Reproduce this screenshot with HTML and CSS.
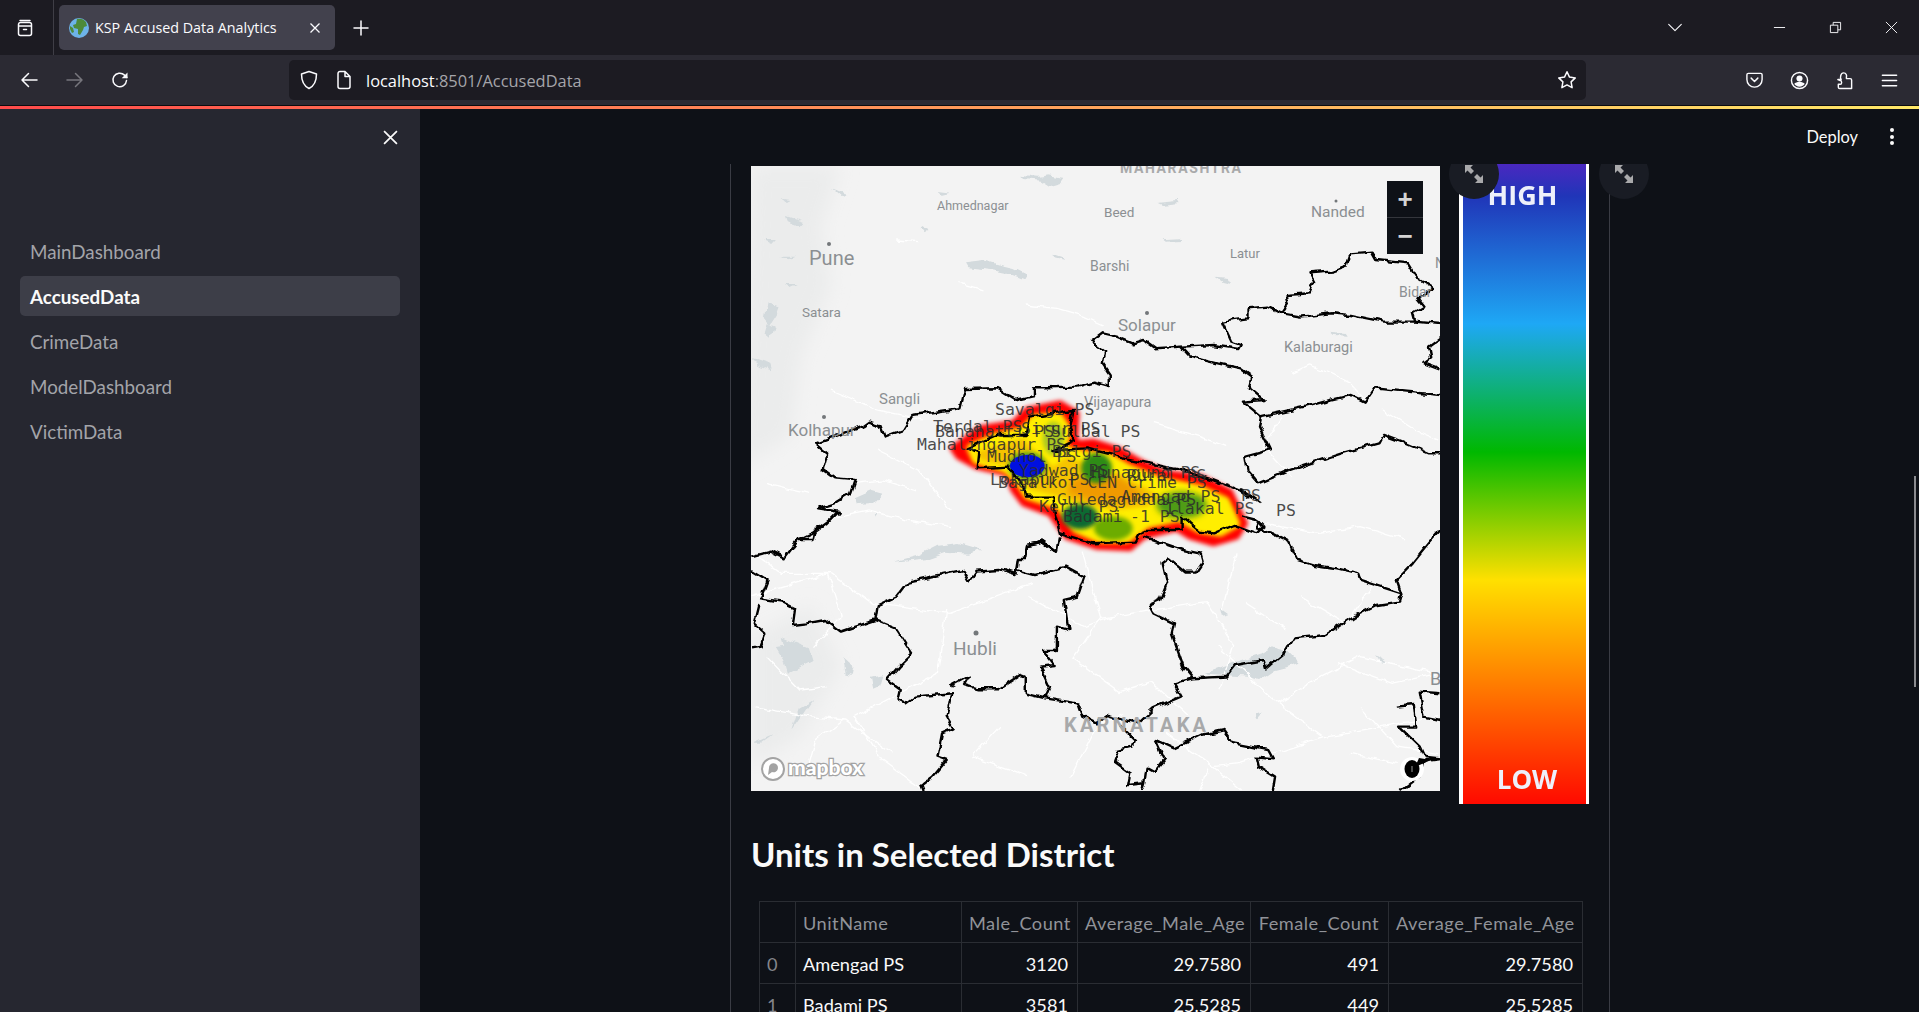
FILE: index.html
```html
<!DOCTYPE html>
<html lang="en">
<head>
    <meta charset="UTF-8">
    <title>KSP Accused Data Analytics</title>
    <link rel="stylesheet" href="styles.css">
</head>
<body>
<div class="window">
    <!-- browser tabs -->
    <div class="tabbar">
        <div class="tabbar-left">
            <svg class="ico" viewBox="0 0 20 20"><path d="M5 2.500h10M3.500 6.500a2 2 0 0 1 2-2h9a2 2 0 0 1 2 2v9a2 2 0 0 1-2 2h-9a2 2 0 0 1-2-2zM3.500 8h13M8.500 11.500h3"/></svg>
        </div>
        <div class="tab">
            <svg class="favicon" viewBox="0 0 20 20"><circle cx="10" cy="10" r="10" fill="#6db3e8"/><path d="M8 1c3-1 7 0 9 3l1 4-3 1-1 3-3 5-2-1 0-5-4-1-1-3 3-1z" fill="#4d8a3a"/><path d="M1 8l3 2 1 4-2 1-2-4z" fill="#4d8a3a"/></svg>
            <span class="tab-title">KSP Accused Data Analytics</span>
            <svg class="tab-close" viewBox="0 0 12 12"><path d="M1.500 1.500l9 9M10.500 1.500l-9 9"/></svg>
        </div>
        <svg class="ico new-tab" viewBox="0 0 20 20"><path d="M10 3v14M3 10h14"/></svg>
        <div class="tabbar-right">
            <svg class="ico tabs-list" viewBox="0 0 20 20"><path d="M3 6l7 7 7-7"/></svg>
            <svg class="win-btn" viewBox="0 0 14 14"><path d="M1 7h12"/></svg>
            <svg class="win-btn" viewBox="0 0 14 14"><path d="M1.500 4.500h8v8h-8zM4.500 4.500v-3h8v8h-3"/></svg>
            <svg class="win-btn" viewBox="0 0 14 14"><path d="M1 1l12 12M13 1L1 13"/></svg>
        </div>
    </div>

    <!-- browser toolbar -->
    <div class="toolbar">
        <svg class="ico back" viewBox="0 0 20 20"><path d="M18 10H3M9.500 3.500L3 10l6.500 6.500"/></svg>
        <svg class="ico forward" viewBox="0 0 20 20"><path d="M2 10h15M10.500 3.500L17 10l-6.500 6.500"/></svg>
        <svg class="ico reload" viewBox="0 0 20 20"><path d="M16.500 10.500a6.800 6.800 0 1 1-2-5.400l2.300 2.300"/><path class="solid" d="M17.500 2.500v5.800h-5.800z"/></svg>
        <div class="urlbar">
            <svg class="ico shield" viewBox="0 0 20 20"><path d="M10 1.500l7.500 2.500c0 7-1.500 11.500-7.500 14.500C4 15.500 2.500 11 2.500 4z"/></svg>
            <svg class="ico page" viewBox="0 0 20 20"><path d="M4 3.500a2 2 0 0 1 2-2h5l5 5v10a2 2 0 0 1-2 2H6a2 2 0 0 1-2-2zM11 1.500v5h5"/></svg>
            <span class="url"><b>localhost</b>:8501/AccusedData</span>
            <svg class="ico star" viewBox="0 0 20 20"><path d="M10 1.800l2.500 5.300 5.800.8-4.200 4 1 5.800-5.100-2.800-5.100 2.800 1-5.800-4.200-4 5.800-.8z"/></svg>
        </div>
        <div class="toolbar-right">
            <svg class="ico" viewBox="0 0 20 20"><path d="M2 4a1.500 1.500 0 0 1 1.500-1.500h13A1.500 1.500 0 0 1 18 4v5a8 8 0 0 1-16 0zM6.500 7.500L10 11l3.500-3.500"/></svg>
            <svg class="ico" viewBox="0 0 20 20"><circle cx="10" cy="10" r="8.500"/><circle class="solid" cx="10" cy="8" r="3.200"/><path class="solid" d="M4.500 13.500c1-1.500 3-2 5.500-2s4.500.5 5.500 2c-1 1.700-3 3-5.500 3s-4.500-1.300-5.500-3z"/></svg>
            <svg class="ico" viewBox="0 0 20 20"><path d="M3 9h3.500C5 7 6 2 9 2s3.500 3 3 4.500V8h4a1.500 1.500 0 0 1 1.500 1.500V18.500H5a1.500 1.500 0 0 1-1.500-1.500v-3h2c2 0 2-4 0-4z"/></svg>
            <svg class="ico" viewBox="0 0 20 20"><path d="M2.500 4.500h15M2.500 10h15M2.500 15.500h15"/></svg>
        </div>
    </div>
    <div class="loadline"></div>

    <div class="app">
        <aside class="sidebar">
            <div class="sidebar-top">
                <svg class="sidebar-close" viewBox="0 0 14 14"><path d="M1 1l12 12M13 1L1 13"/></svg>
            </div>
            <nav class="side-nav">
                <a href="#">MainDashboard</a>
                <a href="#" class="active">AccusedData</a>
                <a href="#">CrimeData</a>
                <a href="#">ModelDashboard</a>
                <a href="#">VictimData</a>
            </nav>
        </aside>

        <main class="main">
            <div class="app-header">
                <span class="deploy">Deploy</span>
                <span class="kebab"><i></i><i></i><i></i></span>
            </div>
            <div class="content">
                <div class="block">
                    <div class="chart-row">
                        <div class="map">
                            <svg class="map-svg" viewBox="0 0 689 625">
                                <defs>
                                    <filter id="blur2" x="-20%" y="-20%" width="140%" height="140%"><feGaussianBlur stdDeviation="7"/></filter>
                                    <filter id="blur3" x="-20%" y="-20%" width="140%" height="140%"><feGaussianBlur stdDeviation="10"/></filter>
                                    <filter id="rough" filterUnits="userSpaceOnUse" x="0" y="0" width="689" height="625">
                                        <feTurbulence type="fractalNoise" baseFrequency=".09" numOctaves="2" seed="4"/>
                                        <feDisplacementMap in="SourceGraphic" scale="7" xChannelSelector="R" yChannelSelector="G"/>
                                    </filter>
                                    <filter id="terrain" filterUnits="userSpaceOnUse" x="0" y="0" width="689" height="625">
                                        <feGaussianBlur stdDeviation="9"/>
                                    </filter>
                                </defs>

                                <!-- soft shading on the west side -->
                                <g class="shade" filter="url(#terrain)">
                                    <path d="M0 0h90l-20 60 10 60-30 70-10 80-50 30z"/>
                                    <path d="M0 470l60-30 30 60-40 70-50 30z"/>
                                </g>

                                <g filter="url(#rough)">
                                    <!-- water and roads, north part -->
                                    <g transform="translate(-11,-16) scale(.4593,.3333)">
                                        <g class="water">
                                            <path d="M610 74l40 6 20-4 36 8-8 16-22 8-18-16-40-5z"/>
                                            <path d="M490 340l45-8 30 12 30 10 30 20-6 14-36-18-36-10-52-8z"/>
                                            <path d="M392 228l16 12-5 10-14-12z"/>
                                            <path d="M905 156l46-6 4 10-36 5zM920 268l38-3 3 8-34 2zM680 314l28 12 2 6-26-8zM1035 380l26 4 8 18-18-6z"/>
                                            <path d="M1285 548l32 4 4 8-28-2zM30 625l36 16 4 20-32-16z"/>
                                            <path d="M250 1045l36-22 22 8-18 28-36 4zM290 1095l10-4-6 12zM870 935l26 8 14 10-24-2z"/>
                                            <path d="M60 460l26 12-6 22-14 30-12-20zM60 520l16 10-8 34-14-16zM100 198l40 18-8 12-28-14zM50 270l26 0-8 12zM90 320l34 0-24 8zM100 405l26 0-16 10zM90 146l18 4-8 6zM200 118l30 16-10 8zM430 120l30 5-20 6z"/>
                                        </g>
                                        <g class="roads">
                                            <path d="M620 465l70 10 50 20 50 30M1200 670l40-25 30 15 60 40 40 60M1400 780l70 60 50 30M340 270l50 5M480 400l50 20M200 720l100 60 100 30"/>
                                            <path d="M150 1160l60-60 70-20 80 30 100 20M250 1000l60-10 70 30M900 820l100 40 60 30M1140 1120l120 30 90-20 100 40M300 900l90 60 70 120M60 1000l90 30M1180 800l-40 90 60 90"/>
                                        </g>
                                    </g>
                                    <!-- water and roads, south part -->
                                    <g transform="translate(-11,354) scale(.4593,.3333)">
                                        <g class="water">
                                            <path d="M335 125l55-20 40-28 45-8 50 20-30 12-46-6-40 20z"/>
                                            <path d="M90 350l25 15 35 20 8 35-26 18-30 20-8-38-16-36 18-4z"/>
                                            <path d="M225 415l22 25-4 28-13-5zM285 470l26-8-8 36-13 8zM1045 265l18 18-14 5z"/>
                                            <path d="M1010 460l60-30 60-25 30-25 30 10 26 38-26 14-30 10-30 28-26-10-40-4z"/>
                                            <path d="M1385 405l18 15-7 8zM1120 580l18-4-14 22zM112 630l16-66 30-24-44 88zM28 668l44-26-26 26z"/>
                                        </g>
                                        <g class="roads">
                                            <path d="M25 230l170-70 90 90 170 30 180-90M450 270l-20 190-180 130 60 130 90 90M785 295l-60 120 100 100 70-30 80 100M785 295l230-50 60 130-30 130M785 295l-40-200M1040 380l130 170 100 100 250-60M1270 650l-180 80-60 10-100-100M1080 100l-30 170M565 620l-60 90 120 60M1170 550l70-60 110-80 170 50"/>
                                            <path d="M30 560l120 30 80 10 100 100M1030 740l60 70M720 770l60-160 60-30M1330 700l100 30M1020 740l-20 80M190 160l30 130-60 90M60 410l70 100 60-10M225 600l-60 60-20 100M630 230l120 90 60-30M1300 430l120 60 100-30M1350 560l80 120 90 20M30 100l60 60 100 0M1220 230l100 80 60-120M1100 250l90 80"/>
                                        </g>
                                    </g>
                                </g>

                                <!-- heat layer -->
                                <g transform="translate(129,194) scale(.3333)">
                                    <path class="heat heat-red" filter="url(#blur2)" d="M218 265L300 205 400 190 440 150 540 130 590 160 585 250 640 245 720 270 790 310 860 340 960 350 1050 395 1095 490 1070 530 1000 550 930 530 890 505 790 530 750 565 650 560 560 530 510 460 430 430 400 390 380 340 290 320 235 290Z"/>
                                    <path class="heat heat-yellow" filter="url(#blur2)" d="M275 265L350 232 430 215 465 178 535 172 560 210 545 270 610 285 680 290 740 325 840 365 960 390 1035 425 1065 490 1020 515 960 505 900 470 800 490 740 535 660 535 590 505 540 435 445 405 420 365 380 325 290 298Z"/>
                                    <path filter="url(#blur2)" fill="#f5c400" d="M290 275L430 235 470 280 520 320 560 290 700 340 800 385 840 410 800 440 700 450 600 430 540 410 440 385 390 320 300 300Z"/>
                                    <path filter="url(#blur3)" fill="#f09a00" d="M580 355L710 345 790 400 750 430 630 420 560 400Z"/>
                                    <ellipse filter="url(#blur2)" cx="520" cy="235" rx="32" ry="50" fill="#a8c820"/>
                                    <ellipse filter="url(#blur2)" cx="650" cy="325" rx="46" ry="45" fill="#2f8c12"/>
                                    <ellipse filter="url(#blur3)" cx="905" cy="435" rx="76" ry="40" fill="#4f9c18"/>
                                    <ellipse filter="url(#blur2)" cx="700" cy="505" rx="58" ry="36" fill="#6cac00"/>
                                    <ellipse filter="url(#blur2)" cx="600" cy="470" rx="54" ry="38" fill="#0a6a30"/>
                                    <ellipse filter="url(#blur2)" cx="442" cy="318" rx="58" ry="42" fill="#5aa818"/>
                                    <ellipse cx="442" cy="318" rx="52" ry="34" fill="#0010e0"/>
                                </g>

                                <g filter="url(#rough)">
                                    <!-- district borders, north part -->
                                    <g class="borders" transform="translate(-11,-16) scale(.4593,.3333)">
                                        <path d="M1525 522L1470 515 1465 490 1490 470 1475 445 1495 430 1510 415 1475 385 1455 340 1385 330 1375 305 1330 310 1320 350 1290 365 1240 370 1250 395 1240 430 1190 435 1195 460 1180 490 1150 470 1105 475 1105 505 1050 515 1060 545 1070 575 1090 585 1085 597 1030 585 960 590 905 595 880 570 855 580 820 560 790 550 765 575 795 605 790 640 805 670 805 708 770 695 735 710 665 712 640 712 640 738 600 750 560 715 490 717 480 775 375 795 355 840 315 860 305 825 280 815 265 830 165 880 190 910 180 960 205 985 250 990 240 1030 205 1060 170 1075 215 1085 190 1120 160 1150 130 1170"/>
                                        <path d="M1180 490L1220 500 1290 490 1330 495 1400 515 1470 515M1525 565L1500 590 1505 625 1490 640 1525 658"/>
                                        <path d="M960 590L980 620 1040 640 1090 655 1115 680 1110 715 1140 750 1095 755 1135 800 1130 830 1155 900 1100 920 1105 960 1130 1000M1130 800L1230 770 1270 755 1330 735 1360 755 1380 715 1450 725 1525 735M1130 1000L1200 960 1310 910 1390 880 1400 855 1440 875 1500 910 1525 910"/>
                                        <path d="M695 1160L690 1205 660 1175 625 1185 620 1230"/>
                                    </g>
                                    <!-- district borders round the heat layer -->
                                    <g class="borders" transform="translate(129,194) scale(.3333)">
                                        <path d="M580 150L450 170 440 225 350 225 260 265 295 280 290 325 385 320 430 380 435 410 520 410 525 465 540 520 640 550 770 545 790 510 905 510 905 470 960 515 1000 520 1060 495 1130 520 1150 500 1130 480 1090 470M580 150L570 210 585 240 520 270 620 265 740 295 900 330 1000 360 1090 395 1140 430"/>
                                    </g>
                                    <!-- district borders, south part -->
                                    <g class="borders" transform="translate(-11,354) scale(.4593,.3333)">
                                        <path d="M195 0L165 30 160 60 125 60 95 115 65 95 24 110M24 150L60 180 45 235 90 245 120 265 115 315 145 310 185 300 220 335 295 300 300 255 340 230 365 185 485 150 500 185 515 155 565 150 600 165 605 120 620 120 625 75 660 65 690 95 695 50"/>
                                        <path d="M600 150L640 165 710 140 750 170 735 230 705 240 715 330 690 320 690 390 660 390 685 435 655 440 675 500 665 535 735 550 745 590 775 610 800 585 865 610 900 565 960 530 945 490 985 475 1060 470 1080 435 1140 420 1145 445 1185 400 1205 355 1275 345 1335 290 1385 255 1435 245 1440 220 1430 180 1465 130 1500 70 1525 30"/>
                                        <path d="M1440 220L1350 180 1345 160 1300 145 1250 135 1215 120 1195 65 1160 40 1125 25 1130 0M40 255L30 310 55 340 45 380 24 385"/>
                                        <path d="M295 300L340 325 375 400 345 440 320 480 350 510 345 540 360 550 380 530 460 520 450 590 465 625 440 640 430 710 450 720 420 770 395 795 400 813M460 500L500 470 490 495 515 505 565 505 610 465 620 470 620 520 665 535"/>
                                        <path d="M985 475L965 440 940 340 945 310 900 280 890 255 915 240 930 190 920 130 935 115 970 155 990 155 1005 125 1000 100 965 90 880 50"/>
                                        <path d="M830 620L860 660 855 680 825 690 815 725 850 760 845 795 880 790 875 813M880 790L885 740 905 755 925 720 905 660 945 685 1005 645 1055 630 1075 670 1150 690 1160 715 1125 710 1130 740 1165 770 1160 813"/>
                                        <path d="M1525 600L1490 590 1480 515 1525 520M1430 560L1465 555 1470 620 1435 620 1480 680 1490 710 1520 715 1490 720 1480 770 1440 813"/>
                                    </g>
                                </g>

                                <!-- base map labels -->
                                <g class="place">
                                    <circle cx="78" cy="78" r="2"/><circle cx="396" cy="147" r="2"/><circle cx="73" cy="251" r="2"/><circle cx="585" cy="35" r="1.500"/><circle cx="225" cy="467" r="2.500"/>
                                    <text class="region" x="369" y="7" font-size="14" letter-spacing="1.600">MAHARASHTRA</text>
                                    <text x="186" y="44" font-size="12.500">Ahmednagar</text>
                                    <text x="353" y="51" font-size="13.500">Beed</text>
                                    <text x="560" y="51" font-size="15.500">Nanded</text>
                                    <text x="58" y="99" font-size="20">Pune</text>
                                    <text x="339" y="105" font-size="14">Barshi</text>
                                    <text x="479" y="92" font-size="13">Latur</text>
                                    <text x="648" y="131" font-size="14">Bidar</text>
                                    <text x="51" y="151" font-size="13.500">Satara</text>
                                    <text x="367" y="165" font-size="17">Solapur</text>
                                    <text x="533" y="186" font-size="14.500">Kalaburagi</text>
                                    <text x="128" y="238" font-size="15">Sangli</text>
                                    <text x="333" y="241" font-size="14.500">Vijayapura</text>
                                    <text x="37" y="270" font-size="17">Kolhapur</text>
                                    <text x="202" y="489" font-size="19">Hubli</text>
                                    <text x="679" y="519" font-size="18">B</text>
                                    <text x="684" y="102" font-size="14">N</text>
                                    <text class="region" x="313" y="566" font-size="20" letter-spacing="3.200">KARNATAKA</text>
                                </g>

                                <!-- unit labels -->
                                <g class="units">
                                    <text x="244" y="249">Savalgi PS</text>
                                    <text x="182" y="266">Terdal PS</text>
                                    <text x="184" y="271">Banahatti PS</text>
                                    <text x="270" y="268">Sirur PS</text>
                                    <text x="300" y="271">Sulbal PS</text>
                                    <text x="166" y="284" font-size="17.500">Mahalingapur PS</text>
                                    <text x="236" y="296">Mudhol PS</text>
                                    <text x="301" y="291">Bilgi PS</text>
                                    <text x="268" y="310">Yadwad PS</text>
                                    <text x="340" y="312">Hunagund PS</text>
                                    <text x="239" y="319">Lokapur PS</text>
                                    <text x="247" y="322">Bagalkot CEN Crime PS</text>
                                    <text x="376" y="315">Rural PS</text>
                                    <text x="306" y="339">Guledagudda PS</text>
                                    <text x="370" y="336">Amengad PS</text>
                                    <text x="288" y="346">Kerur PS</text>
                                    <text x="312" y="356" font-size="18.500">Badami</text>
                                    <text x="379" y="356">-1 PS</text>
                                    <text x="414" y="348">Ilakal PS</text>
                                    <text x="490" y="335">PS</text>
                                    <text x="525" y="350">PS</text>
                                </g>

                                <!-- mapbox logo and info button -->
                                <circle class="logo-ring" cx="22" cy="603" r="11"/>
                                <path class="logo-mark" d="M17 609l1-7a4.500 4.500 0 1 1 3 4z"/>
                                <text class="logo-text" x="37" y="609">mapbox</text>
                                <circle cx="661" cy="603" r="12" fill="#fff"/>
                                <ellipse cx="661" cy="603" rx="7.500" ry="9" fill="#000"/>
                                <path d="M661 600v6" stroke="#666" stroke-width="1.500"/>
                                <path class="borders-plain" d="M664 601L680 594 668 592"/>
                            </svg>
                            <div class="zoom-ctrl">
                                <span class="zoom-btn">+</span>
                                <span class="zoom-btn">&minus;</span>
                            </div>
                        </div>
                        <div class="colorbar">
                            <span class="cb-high">HIGH</span>
                            <span class="cb-low">LOW</span>
                        </div>
                        <button class="expand expand-map"><svg viewBox="0 0 18 18"><path d="M0 0h8L5.500 2.500 9 6 6 9 2.500 5.500 0 8zM18 18h-8l2.500-2.500L9 12l3-3 3.500 3.500L18 10z"/></svg></button>
                        <button class="expand expand-bar"><svg viewBox="0 0 18 18"><path d="M0 0h8L5.500 2.500 9 6 6 9 2.500 5.500 0 8zM18 18h-8l2.500-2.500L9 12l3-3 3.500 3.500L18 10z"/></svg></button>
                    </div>

                    <h3 class="section-title">Units in Selected District</h3>

                    <table class="units-table">
                        <colgroup>
                            <col class="c-index"><col class="c-name"><col class="c-male"><col class="c-male-age"><col class="c-female"><col class="c-female-age">
                        </colgroup>
                        <thead>
                            <tr><th class="idx"></th><th>UnitName</th><th class="num">Male_Count</th><th class="num">Average_Male_Age</th><th class="num">Female_Count</th><th class="num">Average_Female_Age</th></tr>
                        </thead>
                        <tbody>
                            <tr><td class="idx">0</td><td>Amengad PS</td><td class="num">3120</td><td class="num">29.7580</td><td class="num">491</td><td class="num">29.7580</td></tr>
                            <tr><td class="idx">1</td><td>Badami PS</td><td class="num">3581</td><td class="num">25.5285</td><td class="num">449</td><td class="num">25.5285</td></tr>
                        </tbody>
                    </table>
                </div>
            </div>
        </main>
    </div>
    <div class="scroll-thumb"></div>
</div>
</body>
</html>
```

FILE: styles.css
```css
* {
    box-sizing: border-box;
}
html, body {
    margin: 0;
    height: 100%;
    overflow: hidden;
}
body {
    background: #0e1117;
    color: #fafafa;
    font-family: Lato, "Noto Sans", sans-serif;
}
.window {
    position: relative;
    height: 1012px;
    display: flex;
    flex-direction: column;
}

/* browser chrome */
.tabbar {
    height: 55px;
    background: #1c1b22;
    display: flex;
    align-items: center;
    font-family: "Open Sans", sans-serif;
}
.ico {
    width: 20px;
    height: 20px;
    fill: none;
    stroke: #fbfbfe;
    stroke-width: 1.5;
    stroke-linecap: round;
    stroke-linejoin: round;
    flex: none;
}
.ico .solid {
    fill: #fbfbfe;
    stroke: none;
}
.tabbar-left {
    width: 54px;
    height: 55px;
    border-right: 1px solid #3f3e46;
    display: flex;
    align-items: center;
    padding-left: 15px;
    margin-right: 5px;
}
.tab {
    width: 276px;
    height: 45px;
    background: #42414d;
    border-radius: 5px;
    display: flex;
    align-items: center;
    padding: 0 14px 0 10px;
}
.favicon {
    width: 20px;
    height: 20px;
    flex: none;
}
.tab-title {
    margin-left: 6px;
    font-size: 14.3px;
    color: #fbfbfe;
    flex: 1;
    white-space: nowrap;
}
.tab-close {
    width: 12px;
    height: 12px;
    fill: none;
    stroke: #fbfbfe;
    stroke-width: 1.3;
}
.new-tab {
    margin-left: 16px;
}
.tabbar-right {
    margin-left: auto;
    display: flex;
    align-items: center;
}
.tabs-list {
    margin-right: 89px;
    stroke-width: 1.2;
    width: 18px;
    height: 18px;
}
.win-btn {
    width: 13px;
    height: 13px;
    fill: none;
    stroke: #fbfbfe;
    stroke-width: 1;
    margin-right: 43px;
}
.win-btn:last-child {
    margin-right: 21px;
}
.toolbar {
    height: 50px;
    background: #2b2a33;
    display: flex;
    align-items: center;
    padding-left: 19px;
}
.back {
    margin-right: 26px;
}
.forward {
    stroke: #77767d;
    margin-right: 25px;
}
.urlbar {
    width: 1297px;
    height: 40px;
    margin-left: 159px;
    background: #1c1b22;
    border-radius: 5px;
    display: flex;
    align-items: center;
    padding: 0 9px 0 10px;
    font-family: "Open Sans", sans-serif;
}
.page {
    margin-left: 15px;
}
.url {
    margin-left: 12px;
    padding-top: 1px;
    font-size: 16.4px;
    color: #a5a5aa;
    flex: 1;
}
.url b {
    font-weight: 400;
    color: #fbfbfe;
}
.toolbar-right {
    display: flex;
    gap: 26px;
    margin-left: 159px;
}
.toolbar-right .ico {
    width: 19px;
    height: 19px;
}
.loadline {
    height: 4px;
    border-top: 1px solid #0c0c0f;
    background: linear-gradient(to right, #ff4b4b, #ffe868);
}

/* streamlit app */
.app {
    flex: 1;
    min-height: 0;
    display: flex;
}
.sidebar {
    width: 420px;
    flex: none;
    background: #262730;
}
.sidebar-top {
    height: 57px;
    display: flex;
    align-items: center;
    justify-content: flex-end;
    padding-right: 22px;
}
.sidebar-close {
    width: 15px;
    height: 15px;
    fill: none;
    stroke: #fafafa;
    stroke-width: 1.6;
}
.side-nav {
    margin-top: 65px;
    padding: 0 20px;
    display: flex;
    flex-direction: column;
    gap: 5px;
}
.side-nav a {
    height: 40px;
    line-height: 42px;
    padding-left: 10px;
    border-radius: 5px;
    color: #a3a4a9;
    text-decoration: none;
    font-size: 18.8px;
}
.side-nav a.active {
    background: #3d3e48;
    color: #fafafa;
    font-weight: 700;
}
.main {
    flex: 1;
    min-width: 0;
    display: flex;
    flex-direction: column;
}
.app-header {
    height: 55px;
    flex: none;
    display: flex;
    align-items: center;
    justify-content: flex-end;
    padding: 0 25px 0 0;
}
.deploy {
    font-size: 16.4px;
    margin-right: 32px;
}
.kebab {
    display: flex;
    flex-direction: column;
    gap: 2.5px;
}
.kebab i {
    width: 4px;
    height: 4px;
    border-radius: 50%;
    background: #fafafa;
}
.content {
    flex: 1;
    min-height: 0;
    overflow: hidden;
}
.block {
    width: 880px;
    height: 100%;
    margin-left: 310px;
    padding: 0 20px;
    border-left: 1px solid #3a3c44;
    border-right: 1px solid #3a3c44;
}
.chart-row {
    position: relative;
    display: flex;
    align-items: flex-start;
    gap: 19px;
}
.map {
    position: relative;
    width: 689px;
    height: 625px;
    margin-top: 2px;
    background: #f3f3f3;
    overflow: hidden;
    flex: none;
}
.map-svg {
    display: block;
    width: 689px;
    height: 625px;
}
.shade path {
    fill: #ebecec;
}
.water path {
    fill: #d3dadd;
}
.roads path {
    fill: none;
    stroke: #fff;
    stroke-width: 1.3;
    vector-effect: non-scaling-stroke;
}
.heat {
    stroke-linejoin: round;
}
.heat-red {
    fill: #ff0000;
    stroke: #ff0000;
    stroke-width: 18;
}
.heat-yellow {
    fill: #ffee00;
    stroke: #ffee00;
    stroke-width: 30;
}
.borders path {
    fill: none;
    stroke: #000;
    stroke-width: 2.4;
    stroke-linejoin: round;
    vector-effect: non-scaling-stroke;
}
.borders-plain {
    fill: #000;
}
.place text {
    font-family: Roboto, sans-serif;
    fill: #8b8f92;
}
.place circle {
    fill: #73777a;
}
.place .region {
    font-weight: 700;
    fill: #a8a9aa;
}
.units text {
    font-family: "DejaVu Sans Mono", monospace;
    font-size: 16.5px;
    fill: #2c2c2c;
    fill-opacity: .85;
}
.logo-ring {
    fill: #fff;
    stroke: #a3a3a3;
    stroke-width: 2;
}
.logo-mark {
    fill: #a3a3a3;
}
.logo-text {
    font-family: Lato, sans-serif;
    font-size: 21px;
    font-weight: 900;
    fill: #fff;
    stroke: #a3a3a3;
    stroke-width: 2.5;
    paint-order: stroke;
}
.zoom-ctrl {
    position: absolute;
    top: 15px;
    left: 636px;
    width: 36px;
    height: 73px;
    background: #0e1117;
    display: flex;
    flex-direction: column;
}
.zoom-btn {
    flex: 1;
    display: flex;
    align-items: center;
    justify-content: center;
    font-family: "Liberation Sans", sans-serif;
    font-weight: 700;
    font-size: 26px;
    color: #d4d4d4;
}
.zoom-btn + .zoom-btn {
    border-top: 1px solid #34363c;
}
.colorbar {
    position: relative;
    width: 130px;
    height: 640px;
    flex: none;
    border-left: 4.5px solid #fff;
    border-right: 3px solid #fff;
    background: linear-gradient(to bottom, #4a28c0 0, #2035b8 5%, #1ea8f5 25%, #00b800 45%, #ffe000 65%, #ff0a00 100%);
    color: #eef0fa;
    font-family: "Open Sans", sans-serif;
    font-weight: 700;
    text-align: center;
}
.cb-high, .cb-low {
    position: absolute;
    left: 0;
    right: 0;
    filter: blur(.7px);
}
.cb-high {
    top: 12px;
    right: 4px;
    font-size: 27px;
}
.cb-low {
    bottom: 7px;
    left: 5px;
    font-size: 26px;
}
.expand {
    position: absolute;
    top: -15px;
    width: 50px;
    height: 50px;
    padding: 16px;
    border: none;
    border-radius: 50%;
    background: #191c24;
}
.expand svg {
    display: block;
    width: 18px;
    height: 18px;
    fill: #a9a9ab;
}
.expand-map {
    left: 698px;
}
.expand-bar {
    left: 848px;
}
.section-title {
    margin: 30px 0 0;
    height: 67px;
    line-height: 40px;
    font-size: 33px;
    font-weight: 700;
    color: #fafafa;
}
.units-table {
    margin-left: 8px;
    width: 823px;
    table-layout: fixed;
    border-collapse: collapse;
    font-size: 18.2px;
}
.units-table th, .units-table td {
    height: 41px;
    padding: 1px 9px 0 7px;
    border: 1px solid #2a2d33;
    text-align: left;
    font-weight: 400;
    white-space: nowrap;
    overflow: hidden;
}
.units-table th {
    color: #919399;
    letter-spacing: .5px;
}
.units-table .num {
    text-align: right;
}
.units-table .idx {
    color: #84868c;
}
.c-index { width: 36px; }
.c-name { width: 166px; }
.c-male { width: 116px; }
.c-male-age { width: 173px; }
.c-female { width: 138px; }
.c-female-age { width: 194px; }
.scroll-thumb {
    position: absolute;
    top: 476px;
    right: 3px;
    width: 2px;
    height: 211px;
    background: #8a8b8f;
}
```
